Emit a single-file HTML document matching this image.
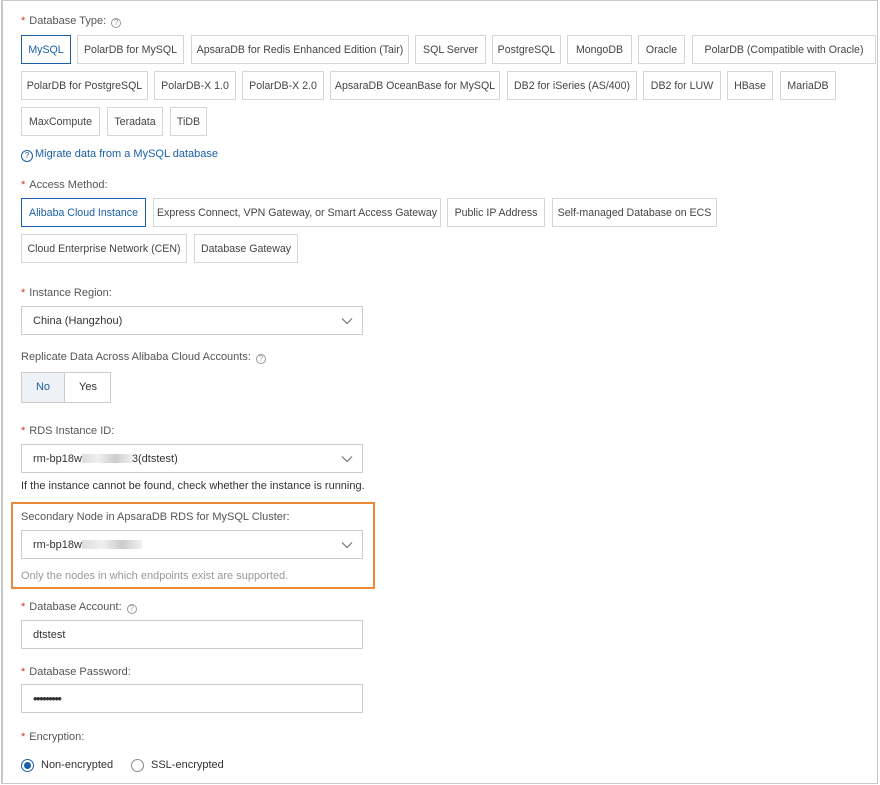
<!DOCTYPE html>
<html><head><meta charset="utf-8"><style>
*{box-sizing:border-box;margin:0;padding:0}
body{width:880px;height:785px;background:#fff;font-family:"Liberation Sans",sans-serif;font-size:11px;color:#333;position:relative;overflow:hidden}
.frame{position:absolute;left:1px;top:0;width:877px;height:784px;border:1px solid #c8c8c8;border-left:2px solid #c8c8c8}
.a{position:absolute}
.b{position:absolute;height:29px;border:1px solid #d6d6d6;line-height:28px;text-align:center;color:#444;white-space:nowrap;font-size:10.6px;overflow:hidden}
.sel{border-color:#1a5fa8;color:#1a5fa8}
.lbl{position:absolute;left:21px;color:#555;font-size:11px}
.lbl i{color:#d93026;font-style:normal;margin-right:4px}
.q{display:inline-block;width:10px;height:10px;border:1px solid #999;border-radius:50%;font-size:8px;line-height:8px;text-align:center;color:#999;margin-left:5px;vertical-align:-1px}
.in{position:absolute;left:21px;width:342px;height:29px;border:1px solid #ccc;padding-left:11px;line-height:28px;font-size:11px}
.chev{position:absolute;right:9px;top:10px}
.hint{position:absolute;left:21px;font-size:11px}
.blur{display:inline-block;width:50px;height:9px;background:linear-gradient(90deg,#ddd,#f0f0f0,#ccc,#f0f0f0);vertical-align:-1px}
</style></head><body>
<div class="frame"></div>
<div class="lbl" style="top:15px"><i>*</i>Database Type:<span class="q">?</span></div>
<div class="b sel" style="left:21px;top:35px;width:50px">MySQL</div>
<div class="b" style="left:77px;top:35px;width:107px">PolarDB for MySQL</div>
<div class="b" style="left:191px;top:35px;width:218px">ApsaraDB for Redis Enhanced Edition (Tair)</div>
<div class="b" style="left:415px;top:35px;width:71px">SQL Server</div>
<div class="b" style="left:492px;top:35px;width:69px">PostgreSQL</div>
<div class="b" style="left:567px;top:35px;width:65px">MongoDB</div>
<div class="b" style="left:638px;top:35px;width:47px">Oracle</div>
<div class="b" style="left:692px;top:35px;width:184px">PolarDB (Compatible with Oracle)</div>
<div class="b" style="left:21px;top:71px;width:127px">PolarDB for PostgreSQL</div>
<div class="b" style="left:154px;top:71px;width:82px">PolarDB-X 1.0</div>
<div class="b" style="left:242px;top:71px;width:82px">PolarDB-X 2.0</div>
<div class="b" style="left:330px;top:71px;width:170px">ApsaraDB OceanBase for MySQL</div>
<div class="b" style="left:507px;top:71px;width:130px">DB2 for iSeries (AS/400)</div>
<div class="b" style="left:643px;top:71px;width:78px">DB2 for LUW</div>
<div class="b" style="left:727px;top:71px;width:46px">HBase</div>
<div class="b" style="left:780px;top:71px;width:56px">MariaDB</div>
<div class="b" style="left:21px;top:107px;width:79px">MaxCompute</div>
<div class="b" style="left:107px;top:107px;width:56px">Teradata</div>
<div class="b" style="left:170px;top:107px;width:37px">TiDB</div>
<div class="a" style="left:21px;top:148px;color:#1a5fa8;font-size:11px"><span class="q" style="border-color:#1a5fa8;color:#1a5fa8;width:12px;height:12px;line-height:10px;margin:0 2px 0 0">?</span>Migrate data from a MySQL database</div>
<div class="lbl" style="top:179px"><i>*</i>Access Method:</div>
<div class="b sel" style="left:21px;top:198px;width:125px">Alibaba Cloud Instance</div>
<div class="b" style="left:153px;top:198px;width:288px">Express Connect, VPN Gateway, or Smart Access Gateway</div>
<div class="b" style="left:447px;top:198px;width:98px">Public IP Address</div>
<div class="b" style="left:552px;top:198px;width:165px">Self-managed Database on ECS</div>
<div class="b" style="left:21px;top:234px;width:166px">Cloud Enterprise Network (CEN)</div>
<div class="b" style="left:194px;top:234px;width:104px">Database Gateway</div>
<div class="lbl" style="top:287px"><i>*</i>Instance Region:</div>
<div class="in" style="top:306px">China (Hangzhou)<svg class="chev" width="12" height="8" viewBox="0 0 12 8"><path d="M1 1.5l5 5 5-5" fill="none" stroke="#777" stroke-width="1.2"/></svg></div>
<div class="lbl" style="top:351px">Replicate Data Across Alibaba Cloud Accounts:<span class="q">?</span></div>
<div class="a" style="left:21px;top:372px;width:90px;height:31px;border:1px solid #ccc"></div>
<div class="a" style="left:22px;top:373px;width:43px;height:29px;background:#eef1f6;border-right:1px solid #ccc;color:#1a5fa8;text-align:center;line-height:29px">No</div>
<div class="a" style="left:66px;top:373px;width:44px;height:29px;text-align:center;line-height:29px">Yes</div>
<div class="lbl" style="top:425px"><i>*</i>RDS Instance ID:</div>
<div class="in" style="top:444px">rm-bp18w<span class="blur"></span>3(dtstest)<svg class="chev" width="12" height="8" viewBox="0 0 12 8"><path d="M1 1.5l5 5 5-5" fill="none" stroke="#777" stroke-width="1.2"/></svg></div>
<div class="hint" style="top:480px">If the instance cannot be found, check whether the instance is running.</div>
<div class="a" style="left:11px;top:502px;width:364px;height:87px;border:2px solid #ec8a3c"></div>
<div class="lbl" style="top:511px">Secondary Node in ApsaraDB RDS for MySQL Cluster:</div>
<div class="in" style="top:530px">rm-bp18w<span class="blur" style="width:60px"></span><svg class="chev" width="12" height="8" viewBox="0 0 12 8"><path d="M1 1.5l5 5 5-5" fill="none" stroke="#777" stroke-width="1.2"/></svg></div>
<div class="hint" style="top:570px;color:#999">Only the nodes in which endpoints exist are supported.</div>
<div class="lbl" style="top:601px"><i>*</i>Database Account:<span class="q">?</span></div>
<div class="in" style="top:620px">dtstest</div>
<div class="lbl" style="top:666px"><i>*</i>Database Password:</div>
<div class="in" style="top:684px;font-size:13px;letter-spacing:-1.5px">•••••••••</div>
<div class="lbl" style="top:731px"><i>*</i>Encryption:</div>
<div class="a" style="left:21px;top:759px;width:13px;height:13px;border:1px solid #1a5fa8;border-radius:50%"><div style="position:absolute;left:2px;top:2px;width:7px;height:7px;border-radius:50%;background:#1a5fa8"></div></div>
<div class="a" style="left:41px;top:759px;font-size:11px">Non-encrypted</div>
<div class="a" style="left:131px;top:759px;width:13px;height:13px;border:1px solid #888;border-radius:50%"></div>
<div class="a" style="left:151px;top:759px;font-size:11px">SSL-encrypted</div>
</body></html>
